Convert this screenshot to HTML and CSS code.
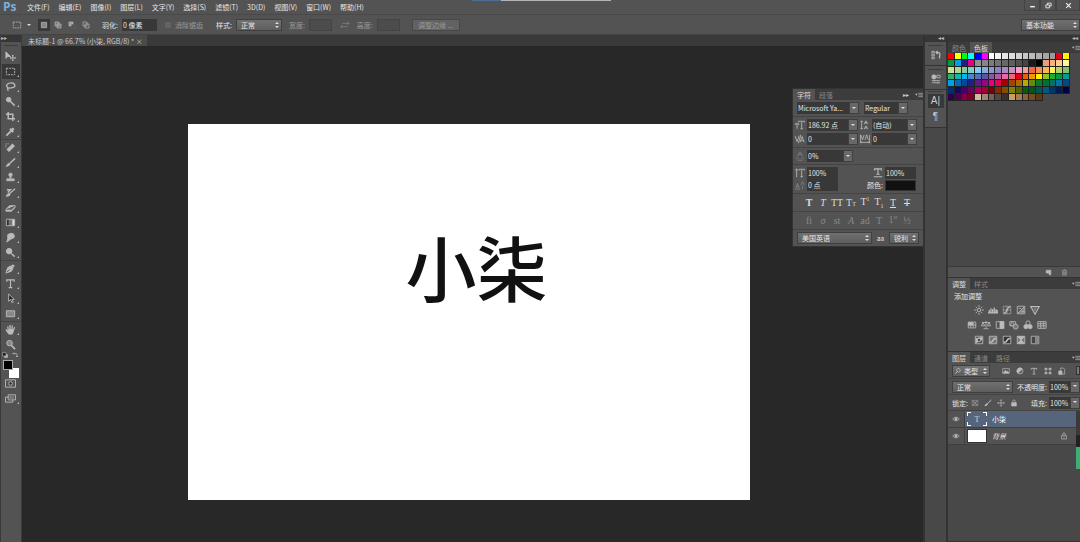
FILE: index.html
```
<!DOCTYPE html>
<html lang="zh-CN">
<head>
    <meta charset="UTF-8" />
    <title>未标题-1</title>
    <link rel="stylesheet" href="styles.css">
</head>
<body>
    <!-- icon set -->
    <svg class="sprite" aria-hidden="true">
        <symbol id="move" viewBox="0 0 12 12"><path d="M1 1v7l2-2h3z" fill="currentColor"/><path d="M8.500 4.500v6M5.500 7.500h6M7.500 5.500l1-1 1 1M7.500 9.500l1 1 1-1M6.500 6.500l-1 1 1 1M10.500 6.500l1 1-1 1"/></symbol>
        <symbol id="marquee" viewBox="0 0 12 12"><path d="M1.500 2.500h9v7h-9z" stroke-dasharray="2 1"/></symbol>
        <symbol id="lasso" viewBox="0 0 12 12"><path d="M3 7C0 5 3 2 7 2s5 4 2 5-5 1-6 0zM3 7c-1 1 1 2 0 4" stroke-width="1.400"/></symbol>
        <symbol id="wand" viewBox="0 0 12 12"><circle cx="4" cy="4" r="2.500" fill="currentColor"/><path d="M5.500 5.500l5 5" stroke-width="1.600"/></symbol>
        <symbol id="crop" viewBox="0 0 12 12"><path d="M3.500 1v7.500H11M1 3.500h7.500V11" stroke-width="1.600"/></symbol>
        <symbol id="dropper" viewBox="0 0 12 12"><path d="M1.500 10.500L7 5" stroke-width="2"/><path d="M5.500 3l3.500 3.500M7 5l2.500-2.500" stroke-width="2.500"/></symbol>
        <symbol id="heal" viewBox="0 0 12 12"><path d="M3 9.500l6.500-6.500" stroke-width="4"/><path d="M1 6V2h3" stroke-dasharray="1 1"/></symbol>
        <symbol id="brush" viewBox="0 0 12 12"><path d="M5 7l6-5.500" stroke-width="1.500"/><path d="M1 10c2 0 1-3 3-3s2 3-3 3z" fill="currentColor"/></symbol>
        <symbol id="stamp" viewBox="0 0 12 12"><circle cx="6" cy="3" r="1.800" fill="currentColor"/><path d="M6 3v4" stroke-width="2"/><path d="M2 7.500h8v2H2z" fill="currentColor"/></symbol>
        <symbol id="history" viewBox="0 0 12 12"><path d="M5 7l6-5M2 3h4L3 6" stroke-width="1.400"/><path d="M1 10c2 0 1-3 3-3s3 3-3 3z" fill="currentColor"/></symbol>
        <symbol id="eraser" viewBox="0 0 12 12"><path d="M1 8l4-4h6L7.500 8zM1 8v2h6l4-4V4" fill="currentColor"/><path d="M1 8h6.500L11 4" stroke="#666"/></symbol>
        <symbol id="gradient" viewBox="0 0 12 12"><path d="M1.500 2.500h9v7h-9z" fill="#777"/><path d="M2 3h2v6H2z" fill="#333" stroke="none"/><path d="M8 3h2v6H8z" fill="#ddd" stroke="none"/></symbol>
        <symbol id="smudge" viewBox="0 0 12 12"><path d="M3 3c2-2 6-2 7 0v3L6 8l-4 3 1-4z" fill="currentColor"/></symbol>
        <symbol id="dodge" viewBox="0 0 12 12"><circle cx="4.500" cy="4.500" r="3" fill="currentColor"/><path d="M7 7l3.500 3.500" stroke-width="1.600"/></symbol>
        <symbol id="pen" viewBox="0 0 12 12"><path d="M1 11l2-6 4-2 2 2-2 4z" fill="currentColor"/><path d="M8 2l2 2" stroke-width="2"/><path d="M2 10l3-3" stroke="#535353"/></symbol>
        <symbol id="type" viewBox="0 0 12 12"><path d="M2 4V2h8v2M6 2v8M4 10.500h4" stroke-width="1.300"/></symbol>
        <symbol id="arrow" viewBox="0 0 12 12"><path d="M4 1v8l2-2 2 4 1-1-1.500-3H10z" fill="#222"/></symbol>
        <symbol id="rect" viewBox="0 0 12 12"><path d="M1.500 3h9v6.500h-9z" fill="#888"/></symbol>
        <symbol id="hand" viewBox="0 0 12 12"><path d="M4 11L1 6.500l1-.5 2 2V6h4l1.500.500L8 11z" fill="currentColor"/><path d="M3.500 6L3 2.500M5.500 6V1M7.500 6l.5-4.500M9 7l1.500-3.500" stroke-width="1.400"/></symbol>
        <symbol id="zoom" viewBox="0 0 12 12"><circle cx="5" cy="4.500" r="3" fill="#888"/><path d="M7 7l4 4" stroke-width="1.800"/></symbol>
        <symbol id="mask" viewBox="0 0 12 12"><path d="M.5 2h11v8H.5z"/><circle cx="6" cy="6" r="2" fill="#333"/></symbol>
        <symbol id="screen" viewBox="0 0 12 12"><path d="M.5 4.500h8v5.500h-8zM3.500 2h8v5.500h-8z"/><path d="M4 3h6v4H4z" fill="#777" stroke="none"/></symbol>
        <symbol id="sel-new" viewBox="0 0 12 12"><path d="M2 2h8v8H2z" fill="#888"/></symbol>
        <symbol id="sel-add" viewBox="0 0 12 12"><path d="M1.500 1.500h6v6h-6zM4.500 4.500h6v6h-6z" fill="#777"/></symbol>
        <symbol id="sel-sub" viewBox="0 0 12 12"><path d="M1.500 1.500h6v3h-3v3h-3z" fill="#999"/><path d="M5 10.500h5.500V5" stroke-dasharray="1 1" stroke="#777"/></symbol>
        <symbol id="sel-int" viewBox="0 0 12 12"><path d="M1.500 1.500h6v6h-6zM4.500 4.500h6v6h-6z"/></symbol>
        <symbol id="swap" viewBox="0 0 12 12"><path d="M1 8h8M3 6L1 8l2 2M11 4H3M9 2l2 2-2 2"/></symbol>
        <symbol id="flip" viewBox="0 0 12 12"><path d="M2 3h6c2 0 2 2 2 7M4 1L2 3l2 2M8 8l2 2 2-2" stroke-width="1.500"/></symbol>
        <symbol id="mini" viewBox="0 0 12 12"><path d="M5 5h6v6H5z" fill="#bbb"/><path d="M1 1h7v7H1z" fill="#222"/></symbol>
        <symbol id="menu" viewBox="0 0 12 12"><path d="M0 4h4L2 7z" fill="currentColor" stroke="none"/><path d="M5 3.500h7M5 6h7M5 8.500h7"/></symbol>
        <symbol id="actions" viewBox="0 0 12 12"><path d="M1 1.500h3v2H1zM1 5h3v2H1zM1 8.500h3v2H1z"/><path d="M6 3h3c2 0 2 2 1 7M8 1L6 3l2 2" stroke-width="1.500"/></symbol>
        <symbol id="props" viewBox="0 0 12 12"><circle cx="3.500" cy="3.500" r="2.500" fill="currentColor"/><path d="M7 1.500h4v3H7zM1 8h10M1 10.500h10M4 7v2M8 9.500v2"/></symbol>
        <symbol id="note" viewBox="0 0 12 12"><path d="M2 2h8v8H7V7H2z" fill="currentColor"/></symbol>
        <symbol id="trash" viewBox="0 0 12 12"><path d="M2 3h8M4.500 1.500h3M3 3v7.500h6V3M5 5v4M7 5v4"/></symbol>
        <symbol id="sun" viewBox="0 0 12 12"><circle cx="6" cy="6" r="2"/><path d="M6 0v3M6 9v3M0 6h3M9 6h3M2 2l2 2M8 8l2 2M10 2L8 4M4 8l-2 2"/></symbol>
        <symbol id="levels" viewBox="0 0 12 12"><path d="M0 9.500h12M1.500 9V6M3.500 9V4M5.500 9V5M7.500 9V3M9.500 9V5M11 9V6" stroke-width="1.500"/></symbol>
        <symbol id="curves" viewBox="0 0 12 12"><path d="M1.500 1.500h9v9h-9zM1 6h10M6 1v10" stroke="#999"/><path d="M2 10c5 0 3-8 8-8" stroke-width="1.500"/></symbol>
        <symbol id="exposure" viewBox="0 0 12 12"><path d="M10 2v8H2z" fill="#888" stroke="none"/><path d="M1.500 1.500h9v9h-9zM2 10l8-8M3 4h3M7 8h3"/></symbol>
        <symbol id="vibrance" viewBox="0 0 12 12"><path d="M1 2h10L6 11z" stroke-width="1.400"/><path d="M4 4h4L6 8z" fill="#888" stroke="none"/></symbol>
        <symbol id="hue" viewBox="0 0 12 12"><path d="M1.500 2.500h9v7h-9zM1 6h10M4.500 3v6M7.500 3v6"/><path d="M2 3h5v3H2z" fill="currentColor"/></symbol>
        <symbol id="balance" viewBox="0 0 12 12"><path d="M6 1v9M3 10.500h6M1 3h10M2.500 3L.5 7h4zM9.500 3l-2 4h4z"/></symbol>
        <symbol id="bw" viewBox="0 0 12 12"><path d="M1.500 2h9v8h-9z"/><path d="M6 2h4.500v8H6z" fill="currentColor"/></symbol>
        <symbol id="photo" viewBox="0 0 12 12"><path d="M1 2h7v5H1z"/><circle cx="8" cy="8" r="3" fill="#777"/><circle cx="4" cy="5" r="2"/></symbol>
        <symbol id="mixer" viewBox="0 0 12 12"><circle cx="6" cy="3.500" r="2.500"/><circle cx="3.500" cy="8" r="2.500" fill="currentColor"/><circle cx="8.500" cy="8" r="2.500" fill="currentColor"/></symbol>
        <symbol id="lookup" viewBox="0 0 12 12"><path d="M1 2h10v8H1zM1 4.500h10M1 7h10M4.500 2v8M8 2v8"/></symbol>
        <symbol id="invert" viewBox="0 0 12 12"><path d="M1.500 1.500h9v9h-9z"/><path d="M2 10V4l8-2v4z" fill="currentColor" stroke="none"/><circle cx="6" cy="6" r="2" fill="#444"/></symbol>
        <symbol id="poster" viewBox="0 0 12 12"><path d="M1.500 1.500h9v9h-9z" fill="#777"/><path d="M2 9l3-1 2-3 3-1" stroke-width="1.800"/></symbol>
        <symbol id="thresh" viewBox="0 0 12 12"><path d="M1.500 1.500h9v9h-9z" fill="#333"/><path d="M2 9l3-1 2-3 3-1" stroke-width="2"/></symbol>
        <symbol id="selective" viewBox="0 0 12 12"><path d="M1.500 1.500h9v9h-9z" fill="#777"/><path d="M2 2l4 4 4-4zM2 10l4-4 4 4z" fill="currentColor"/></symbol>
        <symbol id="gmap" viewBox="0 0 12 12"><path d="M1.500 1.500h9v9h-9z" fill="#444"/><path d="M6 2h4v8H6z" fill="#888" stroke="none"/></symbol>
        <symbol id="image" viewBox="0 0 12 12"><path d="M1 2.500h10v7H1z"/><path d="M2 9l3-4 2 2 1-1 2 3z" fill="currentColor"/></symbol>
        <symbol id="half" viewBox="0 0 12 12"><circle cx="6" cy="6" r="4.500" fill="#666"/><path d="M6 1.500a4.500 4.500 0 0 0 0 9z" fill="currentColor" transform="rotate(45 6 6)"/></symbol>
        <symbol id="shape" viewBox="0 0 12 12"><path d="M3 3h6v6H3z"/><path d="M1 1h3v3H1zM8 1h3v3H8zM1 8h3v3H1zM8 8h3v3H8z" fill="currentColor" stroke="none"/></symbol>
        <symbol id="smart" viewBox="0 0 12 12"><path d="M4 1.500h4l2 2v7H4z"/><path d="M1 6h5v5H1z" fill="currentColor"/></symbol>
        <symbol id="checker" viewBox="0 0 12 12"><path d="M1.500 2h9v8h-9z"/><path d="M2 2h3v3H2zM7 2h3v3H7zM4.500 4.500h3v3h-3zM2 7h3v3H2zM7 7h3v3H7z" fill="#ccc" stroke="none"/></symbol>
        <symbol id="cross" viewBox="0 0 12 12"><path d="M6 1v10M1 6h10M4.500 2.500L6 1l1.500 1.500M4.500 9.500L6 11l1.500-1.500M2.500 4.500L1 6l1.500 1.500M9.500 4.500L11 6 9.500 7.500"/></symbol>
        <symbol id="lock" viewBox="0 0 12 12"><path d="M4 6V3.500a2 2 0 0 1 4 0V6"/><path d="M2.500 5.500h7v5h-7z" fill="currentColor"/></symbol>
        <symbol id="lock-o" viewBox="0 0 12 12"><path d="M4 5V3.500a2 2 0 0 1 4 0V5M2.500 5h7v5.500h-7zM5 7.500h2"/></symbol>
        <symbol id="eye" viewBox="0 0 12 12"><path d="M1 6c2-3.500 8-3.500 10 0-2 3.500-8 3.500-10 0z"/><circle cx="6" cy="6" r="1.800" fill="currentColor"/></symbol>
        <symbol id="search" viewBox="0 0 12 12"><circle cx="7" cy="4.500" r="3.500" stroke-width="1.500"/><path d="M5 7l-4 4" stroke-width="2"/></symbol>
        <symbol id="size" viewBox="0 0 12 12"><path d="M4 3V1.500h7.500V3M8 2v8.500M6.500 10.500h3M.5 6V4.500h4V6M2.500 5v5.500"/></symbol>
        <symbol id="leading" viewBox="0 0 12 12"><path d="M2 1v10M.5 2.500L2 1l1.500 1.500M.5 9.500L2 11l1.500-1.500M5 5l2-4 2 4M6 3.500h3M5 11l2-4 2 4M6 9.500h3"/></symbol>
        <symbol id="kern" viewBox="0 0 12 12"><path d="M0 2l2.500 7L5 2M6 10l2.500-7L11 10M7 8h3M7 1L4 11"/></symbol>
        <symbol id="track" viewBox="0 0 12 12"><path d="M1 1l2 6 2-6M6 7l2-6 2 6M1 10h10M2 9l-1 1 1 1M10 9l1 1-1 1M.5 1v10M11.500 1v10"/></symbol>
        <symbol id="tsume" viewBox="0 0 12 12"><path d="M3 6l3-5 3 5M4 4.500h4M1 8.500h3M8 8.500h3M3 11h6"/></symbol>
        <symbol id="vscale" viewBox="0 0 12 12"><path d="M2 1v10M.5 3L2 1l1.500 2M5 3V1.500h6.500V3M8 2v9M6.500 10.500h3"/></symbol>
        <symbol id="hscale" viewBox="0 0 12 12"><path d="M2 3V1h8v2M6 1v6M4 7.500h4M1 10.500h10" stroke-width="1.400"/></symbol>
        <symbol id="baseline" viewBox="0 0 12 12"><path d="M1 10l2-6 2 6M2 8h3M0 11h6M7 6l2-4 2 4M9 7v4"/></symbol>
    </svg>

    <header class="menubar">
        <div class="logo">Ps</div>
        <nav>
            <a href="#">文件(F)</a>
            <a href="#">编辑(E)</a>
            <a href="#">图像(I)</a>
            <a href="#">图层(L)</a>
            <a href="#">文字(Y)</a>
            <a href="#">选择(S)</a>
            <a href="#">滤镜(T)</a>
            <a href="#">3D(D)</a>
            <a href="#">视图(V)</a>
            <a href="#">窗口(W)</a>
            <a href="#">帮助(H)</a>
        </nav>
        <div class="progress"></div>
        <div class="window-buttons">
            <button aria-label="最小化"><svg viewBox="0 0 12 12"><path d="M2 8h8" stroke-width="2.500"/></svg></button>
            <button aria-label="还原"><svg viewBox="0 0 12 12"><path d="M1.500 5h6v5h-6zM4 5V2h6.500v5H8" stroke-width="1.500"/></svg></button>
            <button class="close" aria-label="关闭"><svg viewBox="0 0 12 12"><path d="M2 2l8 8M10 2l-8 8" stroke-width="2"/></svg></button>
        </div>
    </header>

    <div class="options">
        <button class="preset" aria-label="矩形选框"><svg><use href="#marquee"/></svg><span class="caret"></span></button>
        <div class="modes">
            <button class="active" aria-label="新选区"><svg><use href="#sel-new"/></svg></button>
            <button aria-label="添加到选区"><svg><use href="#sel-add"/></svg></button>
            <button aria-label="从选区减去"><svg><use href="#sel-sub"/></svg></button>
            <button aria-label="与选区交叉"><svg><use href="#sel-int"/></svg></button>
        </div>
        <label class="feather">羽化:<input type="text" value="0 像素"></label>
        <label class="alias off"><input type="checkbox" disabled>消除锯齿</label>
        <label class="style">样式:<select><option>正常</option></select></label>
        <label class="size off">宽度:<input type="text" disabled></label>
        <button class="swap off" aria-label="互换"><svg><use href="#swap"/></svg></button>
        <label class="size off">高度:<input type="text" disabled></label>
        <button class="refine" disabled>调整边缘 ...</button>
        <select class="workspace-select" aria-label="工作区"><option>基本功能</option></select>
    </div>

    <div class="workspace">
        <aside class="toolbar">
            <div class="dock-head">▸▸</div>
            <div class="grip"></div>
            <div class="tools">
                <button aria-label="移动"><svg><use href="#move"/></svg></button>
                <button class="more active" aria-label="选框"><svg><use href="#marquee"/></svg></button>
                <button class="more" aria-label="套索"><svg><use href="#lasso"/></svg></button>
                <button class="more" aria-label="快速选择"><svg><use href="#wand"/></svg></button>
                <button class="more" aria-label="裁剪"><svg><use href="#crop"/></svg></button>
                <button class="more" aria-label="吸管"><svg><use href="#dropper"/></svg></button>
            </div>
            <div class="tools">
                <button class="more" aria-label="修复画笔"><svg><use href="#heal"/></svg></button>
                <button class="more" aria-label="画笔"><svg><use href="#brush"/></svg></button>
                <button class="more" aria-label="仿制图章"><svg><use href="#stamp"/></svg></button>
                <button class="more" aria-label="历史记录画笔"><svg><use href="#history"/></svg></button>
                <button class="more" aria-label="橡皮擦"><svg><use href="#eraser"/></svg></button>
                <button class="more" aria-label="渐变"><svg><use href="#gradient"/></svg></button>
                <button class="more" aria-label="涂抹"><svg><use href="#smudge"/></svg></button>
                <button class="more" aria-label="减淡"><svg><use href="#dodge"/></svg></button>
            </div>
            <div class="tools">
                <button class="more" aria-label="钢笔"><svg><use href="#pen"/></svg></button>
                <button class="more" aria-label="文字"><svg><use href="#type"/></svg></button>
                <button class="more" aria-label="路径选择"><svg><use href="#arrow"/></svg></button>
                <button class="more" aria-label="矩形"><svg><use href="#rect"/></svg></button>
            </div>
            <div class="tools last">
                <button class="more" aria-label="抓手"><svg><use href="#hand"/></svg></button>
                <button aria-label="缩放"><svg><use href="#zoom"/></svg></button>
            </div>
            <div class="mini-row">
                <svg><use href="#mini"/></svg>
                <svg><use href="#flip"/></svg>
            </div>
            <div class="fgbg"><span class="bg"></span><span class="fg"></span></div>
            <div class="tools last">
                <button aria-label="快速蒙版"><svg><use href="#mask"/></svg></button>
                <button class="more" aria-label="屏幕模式"><svg><use href="#screen"/></svg></button>
            </div>
        </aside>

        <main class="document">
            <div class="doc-tabs">
                <div class="doc-tab">未标题-1 @ 66.7% (小柒, RGB/8) * <button aria-label="关闭">×</button></div>
            </div>
            <div class="pasteboard">
                <div class="canvas"><p>小柒</p></div>
            </div>
        </main>

        <aside class="icon-dock">
            <div class="dock-head">◂◂</div>
            <div class="dock-group">
                <button aria-label="历史记录"><svg><use href="#actions"/></svg></button>
            </div>
            <div class="dock-group">
                <button aria-label="属性"><svg><use href="#props"/></svg></button>
            </div>
            <div class="dock-group last">
                <button class="active" aria-label="字符">A|</button>
                <button aria-label="段落">¶</button>
            </div>
        </aside>

        <aside class="panels">
            <div class="dock-head">◂◂</div>
            <section class="panel color-panel">
                <div class="tabs">
                    <button>颜色</button>
                    <button class="active">色板</button>
                    <svg><use href="#menu"/></svg>
                </div>
                <div class="swatches" id="swatches"></div>
                <div class="panel-foot">
                    <svg><use href="#note"/></svg>
                    <svg><use href="#trash"/></svg>
                </div>
            </section>
            <section class="panel adjust-panel">
                <div class="tabs">
                    <button class="active">调整</button>
                    <button>样式</button>
                    <svg><use href="#menu"/></svg>
                </div>
                <h2>添加调整</h2>
                <div class="adjust-row">
                    <svg><use href="#sun"/></svg><svg><use href="#levels"/></svg><svg><use href="#curves"/></svg><svg><use href="#exposure"/></svg><svg><use href="#vibrance"/></svg>
                </div>
                <div class="adjust-row">
                    <svg><use href="#hue"/></svg><svg><use href="#balance"/></svg><svg><use href="#bw"/></svg><svg><use href="#photo"/></svg><svg><use href="#mixer"/></svg><svg><use href="#lookup"/></svg>
                </div>
                <div class="adjust-row">
                    <svg><use href="#invert"/></svg><svg><use href="#poster"/></svg><svg><use href="#thresh"/></svg><svg><use href="#selective"/></svg><svg><use href="#gmap"/></svg>
                </div>
            </section>
            <section class="panel layers-panel">
                <div class="tabs">
                    <button class="active">图层</button>
                    <button>通道</button>
                    <button>路径</button>
                    <svg><use href="#menu"/></svg>
                </div>
                <div class="layer-bar filter">
                    <div class="kind"><svg><use href="#search"/></svg><select aria-label="筛选"><option>类型</option></select></div>
                    <div class="filter-icons">
                        <svg><use href="#image"/></svg><svg><use href="#half"/></svg><svg><use href="#type"/></svg><svg><use href="#shape"/></svg><svg><use href="#smart"/></svg>
                    </div>
                    <span class="switch"></span>
                </div>
                <div class="layer-bar">
                    <select class="blend" aria-label="混合模式"><option>正常</option></select>
                    <label class="amount">不透明度:<input type="text" value="100%"></label>
                    <button class="drop" aria-label="不透明度"></button>
                </div>
                <div class="layer-bar">
                    <span>锁定:</span>
                    <div class="lock-icons">
                        <svg class="off"><use href="#checker"/></svg><svg><use href="#brush"/></svg><svg><use href="#cross"/></svg><svg><use href="#lock"/></svg>
                    </div>
                    <label class="amount">填充:<input type="text" value="100%"></label>
                    <button class="drop" aria-label="填充"></button>
                </div>
                <div class="layer-list">
                    <ul>
                        <li class="active">
                            <svg class="eye"><use href="#eye"/></svg>
                            <div class="layer-body"><span class="thumb type-thumb">T</span><span>小柒</span></div>
                        </li>
                        <li>
                            <svg class="eye"><use href="#eye"/></svg>
                            <div class="layer-body"><span class="thumb"></span><em>背景</em><svg class="locked"><use href="#lock-o"/></svg></div>
                        </li>
                    </ul>
                    <div class="scroll"><span></span></div>
                </div>
            </section>
        </aside>
    </div>

    <!-- floating character panel -->
    <section class="char-panel">
        <div class="tabs">
            <button class="active">字符</button>
            <button>段落</button>
            <span class="collapse">▸▸</span>
            <svg><use href="#menu"/></svg>
        </div>
        <div class="char-row fonts">
            <div class="combo family"><input type="text" value="Microsoft Ya..." aria-label="字体"><button class="drop" aria-label="字体列表"></button></div>
            <div class="combo weight"><input type="text" value="Regular" aria-label="字重"><button class="drop" aria-label="字重列表"></button></div>
        </div>
        <div class="char-row pairs">
            <svg><use href="#size"/></svg>
            <div class="combo"><input type="text" value="186.92 点" aria-label="字号"><button class="drop" aria-label="字号列表"></button></div>
            <svg><use href="#leading"/></svg>
            <div class="combo"><input type="text" value="(自动)" aria-label="行距"><button class="drop" aria-label="行距列表"></button></div>
            <svg><use href="#kern"/></svg>
            <div class="combo"><input type="text" value="0" aria-label="字距微调"><button class="drop" aria-label="字距微调列表"></button></div>
            <svg><use href="#track"/></svg>
            <div class="combo"><input type="text" value="0" aria-label="字距"><button class="drop" aria-label="字距列表"></button></div>
        </div>
        <div class="char-row tsume">
            <svg class="off"><use href="#tsume"/></svg>
            <div class="combo"><input type="text" value="0%" aria-label="比例间距"><button class="drop" aria-label="比例间距列表"></button></div>
        </div>
        <div class="char-row scale">
            <svg><use href="#vscale"/></svg>
            <input type="text" value="100%" aria-label="垂直缩放">
            <svg class="right"><use href="#hscale"/></svg>
            <input type="text" value="100%" aria-label="水平缩放">
            <svg class="off"><use href="#baseline"/></svg>
            <input type="text" value="0 点" aria-label="基线偏移">
            <span class="right">颜色:</span>
            <button class="text-color" aria-label="颜色"></button>
        </div>
        <div class="char-row faux">
            <button><b>T</b></button>
            <button><i>T</i></button>
            <button>TT</button>
            <button>T<small>T</small></button>
            <button>T<sup>1</sup></button>
            <button>T<sub>1</sub></button>
            <button><u>T</u></button>
            <button><s>T</s></button>
        </div>
        <div class="char-row faux disabled">
            <button>fi</button>
            <button><i>&#963;</i></button>
            <button>st</button>
            <button><i>A</i></button>
            <button>ad</button>
            <button>T</button>
            <button>1<sup>st</sup></button>
            <button>½</button>
        </div>
        <div class="char-row lang">
            <select aria-label="语言"><option>美国英语</option></select>
            <span>a<small>a</small></span>
            <select class="sharp" aria-label="消除锯齿"><option>锐利</option></select>
        </div>
    </section>

    <script src="swatches.js"></script>
</body>
</html>
```

FILE: styles.css
```
* {
    box-sizing: border-box;
}
body {
    margin: 0;
    height: 100vh;
    display: flex;
    flex-direction: column;
    overflow: hidden;
    background: #535353;
    color: #e6e6e6;
    font: 7px/10px "Noto Sans CJK SC", sans-serif;
}
button, input, select {
    margin: 0;
    padding: 0;
    border: 0;
    border-radius: 0;
    background: none;
    color: inherit;
    font: inherit;
}
svg {
    width: 10px;
    height: 10px;
    display: block;
    flex: none;
    color: #bbb;
    fill: none;
    stroke: currentColor;
}
.sprite {
    position: absolute;
    width: 0;
    height: 0;
}
.off {
    opacity: 0.45;
}
label {
    display: flex;
    align-items: center;
    gap: 4px;
}
input[type="text"] {
    background: #383838;
    height: 12px;
    padding: 0 1px;
    min-width: 0;
}
select {
    appearance: none;
    height: 12px;
    padding: 0 4px;
    border: 1px solid #3f3f3f;
    background: url("data:image/svg+xml,%3Csvg xmlns='http://www.w3.org/2000/svg' width='4' height='8'%3E%3Cpath d='M0 3l2-2 2 2zM0 5l2 2 2-2z' fill='%23ddd'/%3E%3C/svg%3E") no-repeat right 2px center, linear-gradient(#707070, #5e5e5e);
}

/* menu bar */
.menubar {
    display: flex;
    align-items: center;
    height: 15px;
    border-bottom: 1px solid #494949;
}
.logo {
    width: 23px;
    padding-left: 3px;
    color: #79aede;
    font: bold 12px/14px "Open Sans", sans-serif;
}
.menubar nav {
    display: flex;
    gap: 9px;
    padding-left: 4px;
}
.menubar a {
    color: #e6e6e6;
    text-decoration: none;
}
.progress {
    position: absolute;
    top: 0;
    left: 472px;
    width: 139px;
    height: 1px;
    background: linear-gradient(90deg, #4a6f96 29px, #b5b5b5 29px);
}
.window-buttons {
    display: flex;
    margin-left: auto;
    align-self: flex-start;
}
.window-buttons button {
    width: 16px;
    height: 11px;
    display: flex;
    align-items: center;
    justify-content: center;
    border: 1px solid #444;
    border-top: 0;
}
.window-buttons .close {
    width: 24px;
}
.window-buttons svg {
    width: 7px;
    height: 7px;
    color: #eee;
}

/* options bar */
.options {
    display: flex;
    align-items: center;
    height: 20px;
    padding-top: 1px;
    border-bottom: 1px solid #444;
}
.preset {
    display: flex;
    align-items: center;
    gap: 5px;
    width: 38px;
    padding-left: 12px;
}
.caret {
    border: 2px solid transparent;
    border-top-color: #ddd;
    border-bottom: 0;
}
.modes {
    display: flex;
    gap: 2px;
}
.modes button {
    width: 12px;
    height: 12px;
    padding: 2px;
}
.modes button.active {
    background: #383838;
}
.modes svg {
    width: 8px;
    height: 8px;
}
.feather {
    margin-left: 10px;
}
.feather input {
    width: 35px;
}
.alias {
    margin-left: 8px;
}
.alias input {
    appearance: none;
    width: 6px;
    height: 6px;
    background: #777;
}
.style {
    margin-left: 13px;
}
.style select {
    width: 46px;
}
.size {
    margin-left: 7px;
}
.size input {
    width: 23px;
    border: 1px solid #333;
    background: #444;
}
.swap {
    margin-left: 8px;
}
.refine {
    width: 48px;
    height: 12px;
    margin-left: 12px;
    border: 1px solid #484848;
    background: #626262;
    color: #999;
}
.workspace-select {
    width: 59px;
    margin-left: auto;
}

/* workspace */
.workspace {
    flex: 1;
    display: flex;
    min-height: 0;
    background: #303030;
}
.dock-head {
    height: 7px;
    background: #363636;
    color: #bbb;
    font-size: 6px;
    line-height: 6px;
}
.toolbar {
    width: 22px;
    background: #535353;
    border-left: 1px solid #3a3a3a;
    border-right: 1px solid #3a3a3a;
}
.grip {
    height: 7px;
    margin: 0 3px;
    background: linear-gradient(#535353 3px, #3c3c3c 3px, #3c3c3c 4px, #535353 4px);
}
.tools {
    display: flex;
    flex-direction: column;
    align-items: center;
    border-bottom: 1px solid #444;
}
.tools.last {
    border-bottom: 0;
}
.tools button {
    position: relative;
    width: 18px;
    height: 15px;
    padding-left: 3px;
}
.tools svg {
    width: 11px;
    height: 11px;
}
.tools button.active {
    background: #383838;
}
.tools .more::after {
    content: "";
    position: absolute;
    right: 1px;
    bottom: 2px;
    border-left: 2px solid transparent;
    border-bottom: 2px solid #bbb;
}
.mini-row {
    display: flex;
    justify-content: space-between;
    padding: 0 3px 0 1px;
}
.mini-row svg {
    width: 6px;
    height: 6px;
}
.fgbg {
    display: grid;
    grid-template: repeat(2, 8px) / repeat(2, 8px);
    padding: 2px 0 0 2px;
}
.fgbg span {
    width: 10px;
    height: 10px;
}
.fgbg .bg {
    grid-area: 2 / 2;
    margin-left: -2px;
    background: #fff;
}
.fgbg .fg {
    grid-area: 1 / 1;
    background: #000;
    border: 1px solid #aaa;
}
.document {
    flex: 1;
    display: flex;
    flex-direction: column;
    min-width: 0;
}
.doc-tabs {
    display: flex;
    height: 12px;
    background: #3a3a3a;
    border-bottom: 1px solid #262626;
}
.doc-tab {
    padding: 1px 4px 0 6px;
    background: #4a4a4a;
    color: #ccc;
    white-space: pre;
}
.pasteboard {
    flex: 1;
    display: flex;
    align-items: center;
    justify-content: center;
    padding: 35px 8px 0 0;
    background: #282828;
}
.canvas {
    width: 562px;
    height: 376px;
    padding: 90px 0 0 218px;
    background: #fff;
    color: #111;
}
.canvas p {
    margin: 0;
    font-size: 71px;
    font-weight: 500;
    line-height: 102px;
}

/* icon dock */
.icon-dock {
    width: 24px;
    border-left: 2px solid #333;
    border-right: 1px solid #333;
    background: #484848;
}
.icon-dock .dock-head {
    padding-right: 2px;
    text-align: right;
}
.dock-group {
    display: flex;
    flex-direction: column;
    align-items: center;
    gap: 2px;
    padding: 3px 0;
    border-bottom: 1px solid #333;
    background: #535353;
}
.dock-group::before {
    content: "";
    width: 15px;
    height: 1px;
    background: #3c3c3c;
}
.dock-group.last {
    padding-top: 1px;
}
.dock-group button {
    display: flex;
    align-items: center;
    justify-content: center;
    width: 16px;
    height: 14px;
    color: #ccc;
    font: 10px/14px "Liberation Sans", sans-serif;
}
.dock-group button.active {
    background: #383838;
}

/* panels */
.panels {
    display: flex;
    flex-direction: column;
    width: 133px;
    border-left: 1px solid #333;
    background: #484848;
}
.panels .dock-head {
    padding-right: 2px;
    text-align: right;
}
.panel {
    border-bottom: 1px solid #333;
}
.tabs {
    display: flex;
    align-items: center;
    height: 11px;
    background: #3c3c3c;
    color: #888;
}
.tabs button {
    width: 22px;
    height: 11px;
    line-height: 10px;
}
.tabs button.active {
    background: #535353;
    color: #ddd;
}
.tabs svg {
    width: 8px;
    height: 8px;
    margin-left: auto;
}
.color-panel {
    display: flex;
    flex-direction: column;
    height: 236px;
}
.swatches {
    display: grid;
    grid-template-columns: repeat(18, 1fr);
    grid-template-rows: repeat(7, 1fr);
    width: 122px;
    height: 48px;
}
.swatches span {
    border: solid #222;
    border-width: 0 1px 1px 0;
}
.panel-foot {
    display: flex;
    align-items: center;
    justify-content: flex-end;
    gap: 9px;
    height: 11px;
    margin-top: auto;
    padding-right: 12px;
    border-top: 1px solid #3a3a3a;
    background: #535353;
}
.panel-foot svg {
    width: 7px;
    height: 7px;
}
.adjust-panel {
    height: 74px;
    background: #535353;
}
.adjust-panel h2 {
    margin: 2px 6px 4px;
    font: inherit;
}
.adjust-row {
    display: flex;
    justify-content: center;
    gap: 4px;
    padding-right: 14px;
    margin-bottom: 5px;
}
.layers-panel {
    flex: 1;
}
.layer-bar {
    display: flex;
    align-items: center;
    height: 16px;
    padding-left: 4px;
    border-bottom: 1px solid #444;
    background: #535353;
}
.kind {
    position: relative;
    width: 38px;
}
.kind svg {
    position: absolute;
    left: 3px;
    top: 3px;
    width: 6px;
    height: 6px;
}
.kind select {
    width: 100%;
    padding-left: 11px;
}
.filter-icons {
    display: flex;
    gap: 6px;
    margin-left: 12px;
}
.filter-icons svg, .lock-icons svg {
    width: 8px;
    height: 8px;
}
.switch {
    width: 4px;
    height: 9px;
    margin-left: auto;
    border: 1px solid #333;
    background: #777;
}
.blend {
    width: 61px;
}
.amount {
    gap: 2px;
    margin-left: auto;
}
.amount input {
    width: 21px;
}
.drop {
    flex: none;
    width: 10px;
    height: 12px;
    border: 1px solid #3f3f3f;
    background: url("data:image/svg+xml,%3Csvg xmlns='http://www.w3.org/2000/svg' width='4' height='3'%3E%3Cpath d='M0 0h4L2 2z' fill='%23ddd'/%3E%3C/svg%3E") no-repeat center, #686868;
}
.lock-icons {
    display: flex;
    gap: 5px;
    margin-left: 3px;
}
.layer-list {
    display: flex;
}
.layer-list ul {
    flex: 1;
    margin: 0;
    padding: 0;
    list-style: none;
}
.layer-list li {
    display: flex;
    align-items: center;
    height: 17px;
    border-bottom: 1px solid #404040;
    background: #535353;
}
.layer-list .eye {
    width: 8px;
    height: 8px;
    margin: 0 4px;
}
.layer-body {
    flex: 1;
    display: flex;
    align-items: center;
    gap: 5px;
    height: 16px;
    padding: 0 8px 0 2px;
    border-left: 1px solid #404040;
}
.layer-list .active .layer-body {
    background: #56657b;
    color: #fff;
}
.thumb {
    width: 20px;
    height: 14px;
    background: #fff;
    border: 1px solid #333;
}
.type-thumb {
    border: 0;
    background: linear-gradient(#fff, #fff) 0 0 / 4px 1px, linear-gradient(#fff, #fff) 0 0 / 1px 4px, linear-gradient(#fff, #fff) 100% 0 / 4px 1px, linear-gradient(#fff, #fff) 100% 0 / 1px 4px, linear-gradient(#fff, #fff) 0 100% / 4px 1px, linear-gradient(#fff, #fff) 0 100% / 1px 4px, linear-gradient(#fff, #fff) 100% 100% / 4px 1px, linear-gradient(#fff, #fff) 100% 100% / 1px 4px;
    background-repeat: no-repeat;
    color: #ccc;
    font: 9px/14px "Liberation Serif", serif;
    text-align: center;
}
.locked {
    width: 8px;
    height: 8px;
    margin-left: auto;
}
.scroll {
    width: 4px;
    height: 58px;
    padding-top: 24px;
    background: #3a3a3a;
}
.scroll span {
    display: block;
    height: 34px;
    border-top: 12px solid #222;
    background: #3fae74;
}

/* character panel */
.char-panel {
    position: absolute;
    top: 88px;
    right: 156px;
    width: 132px;
    border: 1px solid #333;
    background: #535353;
}
.collapse {
    margin-left: auto;
    color: #ccc;
    font-size: 6px;
}
.char-panel .tabs svg {
    margin-left: 6px;
}
.char-row {
    display: flex;
    align-items: center;
    padding: 2px;
    border-bottom: 1px solid #444;
}
.combo {
    display: flex;
}
.combo input {
    flex: 1;
    width: 0;
}
.fonts {
    gap: 5px;
    padding-left: 4px;
}
.fonts .family {
    width: 62px;
}
.fonts .weight {
    width: 44px;
}
.pairs {
    display: grid;
    grid-template-columns: 10px 51px 10px 45px;
    gap: 2px;
}
.tsume {
    gap: 2px;
}
.tsume .combo {
    width: 46px;
}
.scale {
    display: grid;
    grid-template-columns: 10px 31px 1fr 31px;
    gap: 0 2px;
    padding-right: 7px;
}
.scale .right {
    justify-self: end;
}
.text-color {
    height: 11px;
    border: 1px solid #333;
    background: #111;
}
.faux {
    padding: 2px 9px;
    height: 18px;
}
.faux button {
    flex: 1;
    color: #ddd;
    font: 10px/12px "Liberation Serif", serif;
}
.faux.disabled button {
    color: #888;
}
.faux small, .faux sup, .faux sub {
    font-size: 6px;
    line-height: 1;
}
.lang {
    gap: 5px;
    padding: 2px 4px;
    border-bottom: 0;
}
.lang select {
    width: 75px;
}
.lang .sharp {
    width: 30px;
}
```

FILE: swatches.js
```
const rows = [
    '#f00 #ff0 #0f0 #0ff #00f #f0f #fff #f2f2f2 #e6e6e6 #dcdcdc #d0d0d0 #c6c6c6 #bbb #b0b0b0 #a6a6a6 #9b9b9b #e60019 #fff100',
    '#009944 #00a0e9 #1d2088 #e4007f #909090 #868686 #7c7c7c #727272 #686868 #5e5e5e #505050 #444 #1a1a1a #000 #f29b76 #f6b37f #facd89 #fff799',
    '#cce198 #acd598 #89c997 #84ccc9 #7ecef4 #88abda #8c97cb #8f82bc #aa89bd #c490bf #f19ec2 #f29c9f #ec6941 #f19149 #f8b551 #fff45c #b3d465 #80c269',
    '#32b16c #13b5b1 #00b7ee #448aca #556fb5 #5f52a0 #8957a1 #ae5da1 #ea68a2 #eb6877 #e60012 #eb6100 #f39800 #fff100 #8fc31f #22ac38 #009944 #009e96',
    '#00a0e9 #0068b7 #00479d #1d2088 #601986 #920783 #e4007f #e5004f #a40000 #a84200 #ac6a00 #b7aa00 #638c0b #097c25 #007130 #00736d #0075a9 #004986',
    '#002e73 #100964 #440062 #6a005f #a4005b #a40035 #7d0000 #7f2d00 #834e00 #8a8000 #486a00 #005e15 #00561f #005752 #005982 #003567 #001c58 #03004c',
    '#31004a #500047 #7e0043 #7d0022 #cfbca4 #9c8876 #736357 #534741 #37302d #c9a063 #a67c52 #8c6239 #754c24 #603813'
];
const box = document.getElementById('swatches');
rows.forEach((row) => {
    row.split(' ').forEach((color) => {
        const cell = document.createElement('span');
        cell.style.background = color;
        box.appendChild(cell);
    });
});
```
